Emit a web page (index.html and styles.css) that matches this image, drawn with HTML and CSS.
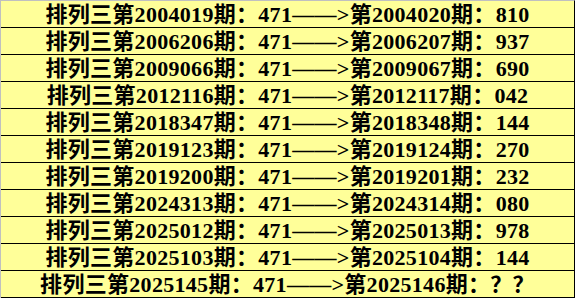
FILE: index.html
```html
<!DOCTYPE html>
<html lang="zh-CN">
<head>
<meta charset="utf-8">
<title>排列三</title>
<link rel="stylesheet" href="styles.css">
</head>
<body>
<div class="board">
  <div class="row">排列三第2004019期：471——&gt;第2004020期：810</div>
  <div class="row">排列三第2006206期：471——&gt;第2006207期：937</div>
  <div class="row">排列三第2009066期：471——&gt;第2009067期：690</div>
  <div class="row">排列三第2012116期：471——&gt;第2012117期：042</div>
  <div class="row">排列三第2018347期：471——&gt;第2018348期：144</div>
  <div class="row">排列三第2019123期：471——&gt;第2019124期：270</div>
  <div class="row">排列三第2019200期：471——&gt;第2019201期：232</div>
  <div class="row">排列三第2024313期：471——&gt;第2024314期：080</div>
  <div class="row">排列三第2025012期：471——&gt;第2025013期：978</div>
  <div class="row">排列三第2025103期：471——&gt;第2025104期：144</div>
  <div class="row">排列三第2025145期：471——&gt;第2025146期：？？</div>
</div>
</body>
</html>
```
FILE: styles.css
```css
html, body {
  margin: 0;
  padding: 0;
  background: #ffffff;
}
.board {
  width: 575px;
  box-sizing: border-box;
  display: flex;
  flex-direction: column;
  border-top: 1px solid #c0c0c0;
  border-left: 1px solid #c0c0c0;
  border-right: 1px solid #000000;
  background: #ffff99;
}
.row {
  box-sizing: content-box;
  height: 24px;
  padding-top: 2px;
  line-height: 24px;
  border-bottom: 1px solid #000000;
  text-align: center;
  white-space: nowrap;
  font-family: "Liberation Serif", "Noto Sans CJK SC", serif;
  font-weight: bold;
  font-size: 22px;
  letter-spacing: 0.3px;
  color: #000000;
}
```
